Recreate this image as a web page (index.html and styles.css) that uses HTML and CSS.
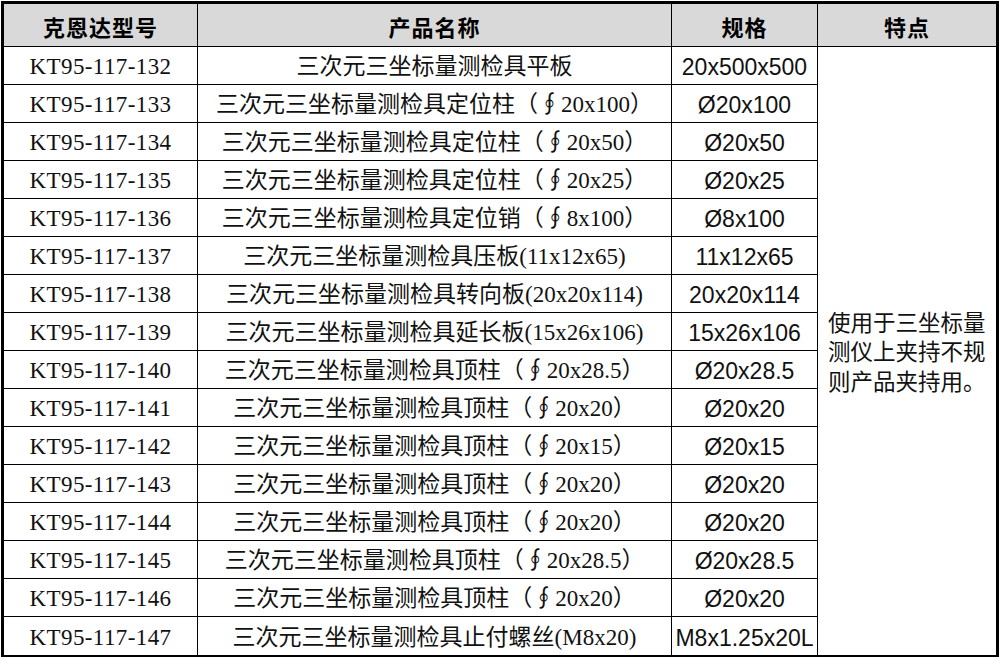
FILE: index.html
```html
<!DOCTYPE html>
<html lang="zh-CN">
<head>
<meta charset="utf-8">
<title>克恩达型号</title>
<link rel="stylesheet" href="styles.css">
</head>
<body>
<div class="sheet">
<table class="grid">
<colgroup>
<col class="c-model"><col class="c-name"><col class="c-spec"><col class="c-feat">
</colgroup>
<thead>
<tr><th>克恩达型号</th><th>产品名称</th><th>规格</th><th class="last-col">特点</th></tr>
</thead>
<tbody>
<tr><td class="model">KT95-117-132</td><td class="name">三次元三坐标量测检具平板</td><td class="spec">20x500x500</td><td class="feat" rowspan="16">使用于三坐标量测仪上夹持不规则产品夹持用。</td></tr>
<tr><td class="model">KT95-117-133</td><td class="name">三次元三坐标量测检具定位柱（∮20x100）</td><td class="spec">Ø20x100</td></tr>
<tr><td class="model">KT95-117-134</td><td class="name">三次元三坐标量测检具定位柱（∮20x50）</td><td class="spec">Ø20x50</td></tr>
<tr><td class="model">KT95-117-135</td><td class="name">三次元三坐标量测检具定位柱（∮20x25）</td><td class="spec">Ø20x25</td></tr>
<tr><td class="model">KT95-117-136</td><td class="name">三次元三坐标量测检具定位销（∮8x100）</td><td class="spec">Ø8x100</td></tr>
<tr><td class="model">KT95-117-137</td><td class="name">三次元三坐标量测检具压板(11x12x65)</td><td class="spec">11x12x65</td></tr>
<tr><td class="model">KT95-117-138</td><td class="name">三次元三坐标量测检具转向板(20x20x114)</td><td class="spec">20x20x114</td></tr>
<tr><td class="model">KT95-117-139</td><td class="name">三次元三坐标量测检具延长板(15x26x106)</td><td class="spec">15x26x106</td></tr>
<tr><td class="model">KT95-117-140</td><td class="name">三次元三坐标量测检具顶柱（∮20x28.5）</td><td class="spec">Ø20x28.5</td></tr>
<tr><td class="model">KT95-117-141</td><td class="name">三次元三坐标量测检具顶柱（∮20x20）</td><td class="spec">Ø20x20</td></tr>
<tr><td class="model">KT95-117-142</td><td class="name">三次元三坐标量测检具顶柱（∮20x15）</td><td class="spec">Ø20x15</td></tr>
<tr><td class="model">KT95-117-143</td><td class="name">三次元三坐标量测检具顶柱（∮20x20）</td><td class="spec">Ø20x20</td></tr>
<tr><td class="model">KT95-117-144</td><td class="name">三次元三坐标量测检具顶柱（∮20x20）</td><td class="spec">Ø20x20</td></tr>
<tr><td class="model">KT95-117-145</td><td class="name">三次元三坐标量测检具顶柱（∮20x28.5）</td><td class="spec">Ø20x28.5</td></tr>
<tr><td class="model">KT95-117-146</td><td class="name">三次元三坐标量测检具顶柱（∮20x20）</td><td class="spec">Ø20x20</td></tr>
<tr class="last-row"><td class="model">KT95-117-147</td><td class="name">三次元三坐标量测检具止付螺丝(M8x20)</td><td class="spec">M8x1.25x20L</td></tr>
</tbody>
</table>
</div>
</body>
</html>
```
FILE: styles.css
```css
html, body {
  margin: 0;
  padding: 0;
  background: #ffffff;
}

body {
  padding: 1px 2px 0 1px;
  font-family: "Liberation Serif", "Noto Sans CJK SC", serif;
  color: #111111;
}

.sheet {
  width: 992px;
  border: 3px solid #000000;
}

.grid {
  width: 992px;
  table-layout: fixed;
  border-collapse: separate;
  border-spacing: 0;
}

.c-model { width: 194px; }
.c-name { width: 474px; }
.c-spec { width: 146px; }
.c-feat { width: 178px; }

.grid th,
.grid td {
  box-sizing: border-box;
  padding: 0;
  border-right: 1px solid #000000;
  border-bottom: 1px solid #000000;
  text-align: center;
  vertical-align: middle;
  white-space: nowrap;
}

.grid th {
  height: 43px;
  padding-top: 2px;
  background: #d9d9d9;
  font-family: "Noto Sans CJK SC", sans-serif;
  font-weight: 700;
  font-size: 22px;
  color: #000000;
  letter-spacing: 1px;
}

.grid td {
  height: 38px;
  padding-top: 3px;
  font-size: 23px;
  line-height: 26px;
}

.grid .last-col,
.grid .feat {
  border-right: none;
}

.last-row td {
  border-bottom: none;
}

.model {
  font-family: "Liberation Serif", "Noto Sans CJK SC", serif;
  font-size: 22px;
  letter-spacing: 0.4px;
}

.name {
  font-family: "Liberation Serif", "Noto Sans CJK SC", serif;
}

.spec {
  font-family: "Liberation Sans", "Noto Sans CJK SC", sans-serif;
  font-size: 21px;
}

.grid td.feat {
  border-bottom: none;
  white-space: normal;
  text-align: left;
  padding: 0 6px 0 10px;
  font-family: "Noto Sans CJK SC", sans-serif;
  font-size: 22.5px;
  line-height: 29.5px;
}
```
